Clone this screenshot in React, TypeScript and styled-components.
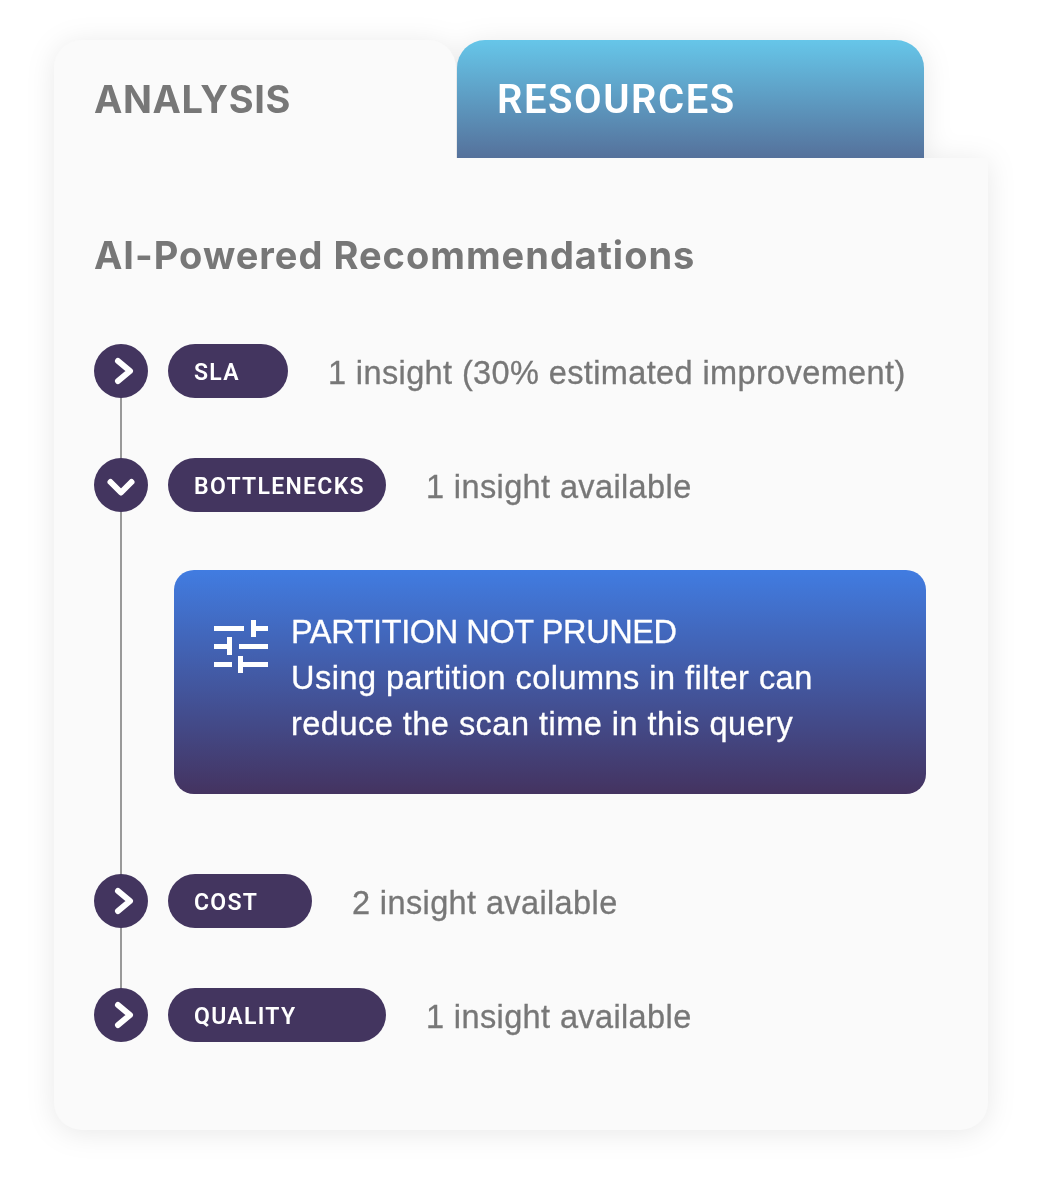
import React from 'react';
import styled, { createGlobalStyle } from 'styled-components';

const items = [
  { label: 'SLA', width: 120, text: '1 insight (30% estimated improvement)' },
  { label: 'BOTTLENECKS', width: 218, text: '1 insight available', open: true },
  { label: 'COST', width: 144, text: '2 insight available' },
  { label: 'QUALITY', width: 218, text: '1 insight available' },
];

const App = () => {
  return (
    <>
      <GlobalStyle />
      <Page>
        <Card>
          <Tabs>
            <ActiveTab>ANALYSIS</ActiveTab>
            <InactiveTab>RESOURCES</InactiveTab>
          </Tabs>
          <Body>
            <Heading>AI-Powered Recommendations</Heading>
            <Timeline>
              {items.map(item => (
                <Entry key={item.label} $open={item.open}>
                  <Row>
                    <Toggle>
                      <svg width="54" height="54" viewBox="0 0 54 54" fill="none">
                        <path
                          d={item.open ? 'M16.5 24L27 34.5L37.5 24' : 'M24 17L36 27L24 37'}
                          stroke="#fff"
                          strokeWidth="6"
                          strokeLinecap="round"
                          strokeLinejoin="round"
                        />
                      </svg>
                    </Toggle>
                    <Pill $width={item.width}>{item.label}</Pill>
                    <Summary>{item.text}</Summary>
                  </Row>
                  {item.open && (
                    <Insight>
                      <svg width="54" height="54" viewBox="0 0 54 54" fill="#fff">
                        <rect x="0" y="6" width="30" height="5" />
                        <rect x="37" y="0" width="5" height="17" />
                        <rect x="37" y="6" width="17" height="5" />
                        <rect x="0" y="24" width="18" height="5" />
                        <rect x="13" y="17" width="5" height="18" />
                        <rect x="25" y="24" width="29" height="5" />
                        <rect x="0" y="42" width="18" height="5" />
                        <rect x="24" y="36" width="5" height="17" />
                        <rect x="24" y="42" width="30" height="5" />
                      </svg>
                      <InsightText>
                        <InsightTitle>PARTITION NOT PRUNED</InsightTitle>
                        Using partition columns in filter can
                        <br />
                        reduce the scan time in this query
                      </InsightText>
                    </Insight>
                  )}
                </Entry>
              ))}
            </Timeline>
          </Body>
        </Card>
      </Page>
    </>
  );
};

export default App;

const GlobalStyle = createGlobalStyle`
  html, body {
    margin: 0;
    background: #fff;
  }
`;

const Page = styled.div`
  width: 1040px;
  height: 1188px;
  padding: 40px 52px 58px 54px;
  box-sizing: border-box;
  overflow: hidden;
`;

const Card = styled.div`
  width: 934px;
  filter: drop-shadow(0 3px 14px rgba(0, 0, 0, 0.09));
`;

const Tabs = styled.div`
  display: flex;
  height: 118px;
`;

const ActiveTab = styled.div`
  width: 402px;
  padding: 36px 0 0 40px;
  box-sizing: border-box;
  background: #fafafa;
  border-radius: 28px 28px 0 0;
  color: #777;
  font: 700 38px/46px Inter, sans-serif;
  letter-spacing: 0.6px;
`;

const InactiveTab = styled.div`
  width: 467px;
  margin-left: 1px;
  padding: 37px 0 0 40px;
  box-sizing: border-box;
  background: linear-gradient(#66c6e9, #55719b);
  border-radius: 28px 28px 0 0;
  color: #fff;
  font: 600 40px/46px Roboto, sans-serif;
  letter-spacing: 1.55px;
`;

const Body = styled.div`
  height: 972px;
  padding: 76px 62px 0 40px;
  box-sizing: border-box;
  background: #fafafa;
  border-radius: 0 0 28px 28px;
`;

const Heading = styled.h2`
  margin: 0;
  color: #777;
  font: 700 38px/43px Inter, sans-serif;
  letter-spacing: 1px;
`;

const Timeline = styled.div`
  position: relative;
  margin-top: 67px;
  display: flex;
  flex-direction: column;
  gap: 60px;

  &::before {
    content: '';
    position: absolute;
    left: 26px;
    top: 27px;
    bottom: 27px;
    width: 2px;
    background: #999;
  }
`;

const Entry = styled.div<{ $open?: boolean }>`
  position: relative;
  padding-bottom: ${p => (p.$open ? '20px' : '0')};
`;

const Row = styled.div`
  display: flex;
  align-items: center;
  height: 54px;
`;

const Toggle = styled.div`
  width: 54px;
  height: 54px;
  flex: none;
  border-radius: 50%;
  background: #43355f;
`;

const Pill = styled.div<{ $width: number }>`
  width: ${p => p.$width}px;
  height: 54px;
  margin: 0 40px 0 20px;
  padding-left: 26px;
  box-sizing: border-box;
  flex: none;
  border-radius: 27px;
  background: #43355f;
  color: #fff;
  font: 600 23px/58px Roboto, sans-serif;
  letter-spacing: 1.3px;
`;

const Summary = styled.div`
  margin-top: 3px;
  color: #777;
  font: 400 32.5px/58px 'Liberation Sans', sans-serif;
  letter-spacing: 0.38px;
  -webkit-text-stroke: 0.3px #777;
  white-space: nowrap;
`;

const Insight = styled.div`
  display: flex;
  gap: 23px;
  width: 752px;
  height: 224px;
  margin: 58px 0 0 80px;
  padding: 50px 0 0 40px;
  box-sizing: border-box;
  border-radius: 20px;
  background: linear-gradient(#417ce1, #443360);

  svg {
    flex: none;
  }
`;

const InsightText = styled.div`
  margin-top: -11px;
  color: #fff;
  font: 400 32.5px/46px 'Liberation Sans', sans-serif;
  letter-spacing: 0.48px;
  -webkit-text-stroke: 0.3px #fff;
  white-space: nowrap;
`;

const InsightTitle = styled.div`
  letter-spacing: -0.4px;
`;
